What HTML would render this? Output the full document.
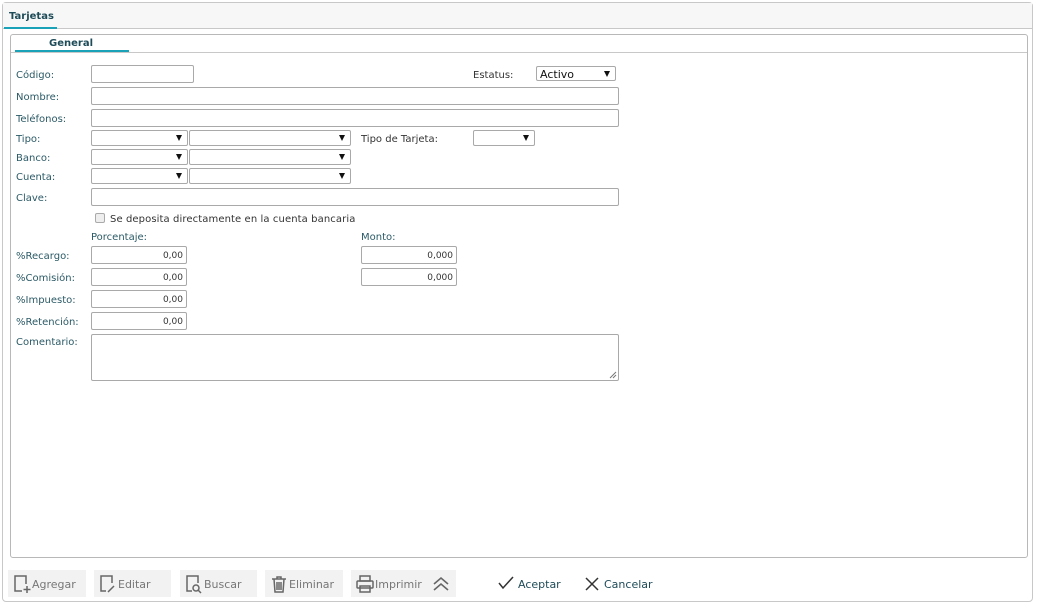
<!DOCTYPE html><html><head><meta charset="utf-8"><style>
*{box-sizing:border-box;margin:0;padding:0}
body{width:1037px;height:603px;background:#fff;font-family:"DejaVu Sans",Verdana,sans-serif;font-size:10px;color:#2b5a66;position:relative;overflow:hidden}
.a{position:absolute}
.in{position:absolute;border:1px solid #a9a9a9;border-radius:2px;background:#fff}
.sel{position:absolute;border:1px solid #a9a9a9;border-radius:2px;background:#fff}
.sel:after{content:"";position:absolute;right:5px;top:4px;border-left:3.5px solid transparent;border-right:3.5px solid transparent;border-top:6px solid #111}
.num{text-align:right;padding-right:3px;font-size:9px;color:#333;line-height:18px}
.lbl{position:absolute;left:16px}
.btn{position:absolute;top:570px;height:27px;background:#f2f2f2;color:#777;font-size:11px;line-height:29px}
.btn svg{position:absolute;left:4px;top:4px}
.btn span{position:absolute}
</style></head><body>
<div class="a" style="left:2px;top:2px;width:1031px;height:600px;border:1px solid #c8c8c8;border-radius:4px"></div>
<div class="a" style="left:3px;top:3px;width:1029px;height:26px;background:#f7f7f7;border-bottom:1px solid #c8c8c8"></div>
<div class="a" style="left:9px;top:11px;font-weight:bold;color:#1e4b58;font-size:10px">Tarjetas</div>
<div class="a" style="left:4px;top:27px;width:53px;height:2px;background:#1aa3b8"></div>
<div class="a" style="left:10px;top:34px;width:1018px;height:524px;border:1px solid #b8b8b8;border-radius:3px"></div>
<div class="a" style="left:11px;top:52px;width:1016px;height:1px;background:#c8c8c8"></div>
<div class="a" style="left:49px;top:38px;font-weight:bold;color:#1e4b58">General</div>
<div class="a" style="left:15px;top:50px;width:114px;height:2px;background:#1aa3b8"></div>

<div class="lbl" style="top:70px">Código:</div><div class="in" style="left:91px;top:65px;width:103px;height:18px"></div>
<div class="a" style="left:473px;top:70px;color:#333">Estatus:</div>
<div class="sel" style="left:536px;top:66px;width:80px;height:15px"><span style="position:absolute;left:3px;top:1px;font-size:11px;color:#111">Activo</span></div>
<div class="lbl" style="top:92px">Nombre:</div><div class="in" style="left:91px;top:87px;width:528px;height:18px"></div>
<div class="lbl" style="top:114px">Teléfonos:</div><div class="in" style="left:91px;top:109px;width:528px;height:18px"></div>
<div class="lbl" style="top:134px">Tipo:</div><div class="sel" style="left:91px;top:130px;width:97px;height:16px"></div><div class="sel" style="left:189px;top:130px;width:162px;height:16px"></div>
<div class="a" style="left:361px;top:134px;color:#333">Tipo de Tarjeta:</div><div class="sel" style="left:473px;top:130px;width:62px;height:16px"></div>
<div class="lbl" style="top:153px">Banco:</div><div class="sel" style="left:91px;top:149px;width:97px;height:16px"></div><div class="sel" style="left:189px;top:149px;width:162px;height:16px"></div>
<div class="lbl" style="top:172px">Cuenta:</div><div class="sel" style="left:91px;top:168px;width:97px;height:16px"></div><div class="sel" style="left:189px;top:168px;width:162px;height:16px"></div>
<div class="lbl" style="top:193px">Clave:</div><div class="in" style="left:91px;top:188px;width:528px;height:18px"></div>
<div class="a" style="left:95px;top:213px;width:10px;height:10px;border:1px solid #aaa;border-radius:2px;background:#eee"></div>
<div class="a" style="left:110px;top:214px;color:#333;letter-spacing:0.1px">Se deposita directamente en la cuenta bancaria</div>
<div class="a" style="left:91px;top:232px">Porcentaje:</div><div class="a" style="left:361px;top:232px">Monto:</div>
<div class="lbl" style="top:251px">%Recargo:</div><div class="in num" style="left:91px;top:246px;width:96px;height:18px">0,00</div><div class="in num" style="left:361px;top:246px;width:96px;height:18px">0,000</div>
<div class="lbl" style="top:273px">%Comisión:</div><div class="in num" style="left:91px;top:268px;width:96px;height:18px">0,00</div><div class="in num" style="left:361px;top:268px;width:96px;height:18px">0,000</div>
<div class="lbl" style="top:295px">%Impuesto:</div><div class="in num" style="left:91px;top:290px;width:96px;height:18px">0,00</div>
<div class="lbl" style="top:317px">%Retención:</div><div class="in num" style="left:91px;top:312px;width:96px;height:18px">0,00</div>
<div class="lbl" style="top:337px">Comentario:</div><div class="in" style="left:91px;top:334px;width:528px;height:47px"><svg class="a" style="right:1px;bottom:1px" width="8" height="8"><path d="M1 7L7 1M4 7L7 4" stroke="#777"/></svg></div>

<div class="btn" style="left:8px;width:78px"><svg width="20" height="20" fill="none" stroke="#666" stroke-width="1.5"><path d="M10 17H3V2h11v8"/><path d="M15 12v7M11.5 15.5h7"/></svg><span style="left:24px">Agregar</span></div>
<div class="btn" style="left:94px;width:77px"><svg width="20" height="20" fill="none" stroke="#666" stroke-width="1.5"><path d="M8 17H3V2h11v7"/><path d="M10 18l6-6"/></svg><span style="left:24px">Editar</span></div>
<div class="btn" style="left:180px;width:77px"><svg width="20" height="20" fill="none" stroke="#666" stroke-width="1.5"><path d="M8 17H3V2h11v7"/><circle cx="12" cy="14" r="3"/><path d="M14 16l3 3"/></svg><span style="left:24px">Buscar</span></div>
<div class="btn" style="left:265px;width:78px"><svg width="20" height="20" fill="none" stroke="#666" stroke-width="1.5"><path d="M3 5h14M8 5V3h4v2M5 5l1 13h8l1-13M8 8v8M10 8v8M12 8v8"/></svg><span style="left:24px">Eliminar</span></div>
<div class="btn" style="left:351px;width:105px"><svg width="20" height="20" fill="none" stroke="#666" stroke-width="1.5"><rect x="5" y="2" width="10" height="5"/><rect x="2" y="7" width="16" height="7" rx="1"/><rect x="5" y="12" width="10" height="6"/></svg><span style="left:24px">Imprimir</span><svg style="left:80px" width="20" height="20" fill="none" stroke="#666" stroke-width="1.6"><path d="M3 10l7-6 7 6M3 16l7-6 7 6"/></svg></div>
<div class="a" style="left:497px;top:575px"><svg width="18" height="16" fill="none" stroke="#333" stroke-width="1.5"><path d="M2 8l4 5 10-11"/></svg></div>
<div class="a" style="left:518px;top:578px;font-size:11px;color:#1e4b58">Aceptar</div>
<div class="a" style="left:584px;top:576px"><svg width="16" height="16" fill="none" stroke="#333" stroke-width="1.5"><path d="M2 2l12 12M14 2L2 14"/></svg></div>
<div class="a" style="left:604px;top:578px;font-size:11px;color:#1e4b58">Cancelar</div>
</body></html>
